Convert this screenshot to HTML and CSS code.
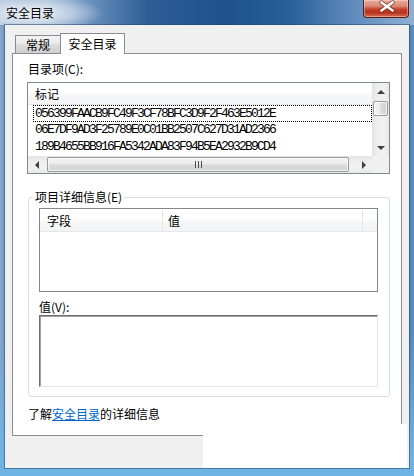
FILE: index.html
```html
<!DOCTYPE html>
<html lang="zh-CN">
<head>
<meta charset="utf-8">
<title>安全目录</title>
<link rel="stylesheet" href="styles.css">
</head>
<body>
<div class="window">
  <div class="titlebar">
    <span class="title">安全目录</span>
    <div class="close">
      <svg width="46" height="18" viewBox="0 0 46 18">
        <path d="M18.5 3.5 L29.5 11.5 M29.5 3.5 L18.5 11.5" stroke="#5a1409" stroke-width="4.5" stroke-linecap="round" opacity="0.55" fill="none"/>
        <path d="M18.5 3.5 L29.5 11.5 M29.5 3.5 L18.5 11.5" stroke="#ffffff" stroke-width="2.4" stroke-linecap="square" fill="none"/>
      </svg>
    </div>
  </div>
  <div class="client">
    <div class="tabs">
      <div class="tab">常规</div>
      <div class="tab active">安全目录</div>
    </div>
    <div class="panel">
      <div class="label">目录项(C):</div>
      <div class="listbox">
        <div class="lb-main">
          <div class="lb-content">
            <div class="lv-header"><span class="hcol">标记</span></div>
            <div class="row focus">056399FAACB9FC49F3CF78BFC3D9F2F463E5012E</div>
            <div class="row">06E7DF9AD3F25789E0C01BB2507C627D31AD2366</div>
            <div class="row">189B4655BB916FA5342ADA83F94B5EA2932B9CD4</div>
          </div>
          <div class="vscroll">
            <div class="sbtn"><span class="tri up"></span></div>
            <div class="vthumb"></div>
            <div class="vtrack"></div>
            <div class="sbtn"><span class="tri down"></span></div>
          </div>
        </div>
        <div class="lb-bottom">
          <div class="hscroll">
            <div class="sbtn"><span class="tri left"></span></div>
            <div class="hthumb"><span class="grip"></span></div>
            <div class="htrack"></div>
            <div class="sbtn"><span class="tri right"></span></div>
          </div>
          <div class="corner"></div>
        </div>
      </div>

      <fieldset class="group">
        <legend>项目详细信息(E)</legend>
        <div class="listview">
          <div class="lv-header cols">
            <span class="c1">字段</span>
            <span class="c2">值</span>
            <span class="c3"></span>
          </div>
        </div>
        <div class="label2">值(V):</div>
        <div class="textbox"></div>
      </fieldset>

      <div class="linkline">了解<a class="link">安全目录</a>的详细信息</div>
    </div>
  </div>
  <div class="blank"></div>
</div>
</body>
</html>
```

FILE: styles.css
```css
* { box-sizing: border-box; }
html, body { margin: 0; padding: 0; }
body {
  width: 414px;
  height: 476px;
  overflow: hidden;
  font-family: "Noto Sans CJK SC", "Noto Sans", sans-serif;
  font-size: 12px;
  color: #000;
  background: #fff;
}

.window {
  position: relative;
  width: 414px;
  height: 476px;
  display: flex;
  flex-direction: column;
  background:
    linear-gradient(180deg, rgba(120,150,190,0) 0%, rgba(120,180,225,0) 70%, rgba(110,180,226,1) 98%),
    linear-gradient(90deg, #8aa7c9 0%, #5e8fc1 2%, #3c73ad 10%, #2a5f98 40%, #2f6aa6 70%, #2a5e97 97%, #5f93c6 100%);
}

.titlebar {
  height: 25px;
  display: flex;
  align-items: flex-start;
  background:
    radial-gradient(ellipse 70px 18px at 34px 13px, rgba(235,240,246,0.95) 0%, rgba(220,230,240,0.6) 55%, rgba(200,215,232,0) 100%),
    linear-gradient(90deg, #b4c6db 0%, #9fb7d2 12%, #5f88b7 24%, #2c5d95 36%, #1f528c 55%, #2a5f99 70%, #5b88bb 84%, #8fb0d3 100%);
}
.title {
  padding-left: 6px;
  line-height: 25px;
  font-size: 12px;
  color: #000;
  text-shadow: 0 0 6px rgba(255,255,255,0.9);
}
.close {
  margin-left: auto;
  margin-right: 5px;
  width: 46px;
  height: 18px;
  border: 1px solid #5e1d13;
  border-top: none;
  border-radius: 0 0 4px 4px;
  background: linear-gradient(180deg, #e9aa9b 0%, #dc8a76 35%, #c3402a 55%, #b8311c 75%, #d6705a 100%);
  box-shadow: inset 0 0 0 1px rgba(255,255,255,0.35);
  overflow: hidden;
}
.close svg { display: block; margin: -1px 0 0 -1px; }

.client {
  flex: 1;
  margin: 0 5px 8px 5px;
  padding: 8px 7px 0 7px;
  background: #f0f0f0;
  display: flex;
  flex-direction: column;
  box-shadow: 0 0 0 1px rgba(40,70,110,0.55);
}

.tabs {
  height: 21px;
  display: flex;
  align-items: flex-end;
  padding-left: 3px;
  margin-bottom: -1px;
  position: relative;
  z-index: 1;
}
.tab {
  width: 46px;
  height: 19px;
  border: 1px solid #898c95;
  border-bottom: 1px solid #898c95;
  background: linear-gradient(180deg, #f3f3f3 0%, #ebebeb 45%, #dddddd 50%, #cfcfcf 100%);
  display: flex;
  align-items: center;
  justify-content: center;
  line-height: 16px;
}
.tab.active {
  width: 65px;
  height: 21px;
  margin-left: -1px;
  background: #fff;
  border-bottom: none;
  padding-bottom: 1px;
}

.panel {
  width: 390px;
  height: 383px;
  border: 1px solid #898c95;
  background: #fff;
  padding: 7px 0 0 14px;
  display: flex;
  flex-direction: column;
}

.label { line-height: 16px; height: 16px; padding-left: 1px; }

.listbox {
  margin-top: 5px;
  width: 363px;
  height: 92px;
  border: 1px solid #828790;
  display: flex;
  flex-direction: column;
}
.lb-main { display: flex; height: 73px; }
.lb-content { flex: 1; }
.lv-header {
  height: 22px;
  line-height: 21px;
  background: linear-gradient(180deg, #ffffff 0%, #ffffff 45%, #f6f7f8 55%, #f3f4f5 100%);
  border-bottom: 1px solid #e5e6e8;
}
.hcol { padding-left: 7px; }
.row {
  height: 17px;
  line-height: 16px;
  margin-left: 5px;
  padding-left: 2px;
  font-family: "Liberation Mono", monospace;
  font-size: 13px;
  letter-spacing: -1.8px;
  white-space: nowrap;
  overflow: hidden;
}
.row.focus {
  border: 1px dotted #000;
  padding-left: 1px;
  line-height: 15px;
}

.vscroll {
  width: 17px;
  display: flex;
  flex-direction: column;
  background: linear-gradient(90deg, #e3e3e3 0%, #eeeeee 30%, #f1f1f1 70%, #e8e8e8 100%);
}
.sbtn {
  width: 17px;
  height: 17px;
  display: flex;
  align-items: center;
  justify-content: center;
  flex: none;
}
.vthumb {
  margin: 1px 1px 0 1px;
  height: 15px;
  border: 1px solid #9a9a9a;
  border-radius: 2px;
  background: linear-gradient(90deg, #f4f4f4 0%, #ebebeb 45%, #d9d9d9 55%, #d4d4d4 100%);
  box-shadow: inset 0 0 0 1px rgba(255,255,255,0.7);
}
.vtrack { flex: 1; }

.tri { width: 0; height: 0; display: block; }
.tri.up { border-left: 4px solid transparent; border-right: 4px solid transparent; border-bottom: 4px solid #404040; }
.tri.down { border-left: 4px solid transparent; border-right: 4px solid transparent; border-top: 4px solid #404040; }
.tri.left { border-top: 4px solid transparent; border-bottom: 4px solid transparent; border-right: 4px solid #404040; }
.tri.right { border-top: 4px solid transparent; border-bottom: 4px solid transparent; border-left: 4px solid #404040; }

.lb-bottom { display: flex; height: 17px; }
.hscroll {
  flex: 1;
  display: flex;
  background: linear-gradient(180deg, #e3e3e3 0%, #eeeeee 30%, #f1f1f1 70%, #e8e8e8 100%);
}
.hthumb {
  width: 302px;
  margin: 1px 0 1px 2px;
  border: 1px solid #9a9a9a;
  border-radius: 2px;
  background: linear-gradient(180deg, #f4f4f4 0%, #ebebeb 45%, #d9d9d9 55%, #d4d4d4 100%);
  box-shadow: inset 0 0 0 1px rgba(255,255,255,0.7);
  display: flex;
  align-items: center;
  justify-content: center;
}
.grip {
  width: 7px;
  height: 7px;
  background: repeating-linear-gradient(90deg, #4c4c4c 0 1px, transparent 1px 3px);
}
.htrack { flex: 1; }
.corner { width: 17px; background: #f0f0f0; }

.group {
  margin: 15px 0 0 1px;
  width: 362px;
  border: 1px solid #d5dfe5;
  border-radius: 3px;
  padding: 0 10px 9px 10px;
  min-width: 0;
}
.group legend {
  padding: 0 2px;
  margin-left: -6px;
  line-height: 16px;
  height: 16px;
}
.listview {
  margin-top: 3px;
  width: 339px;
  height: 84px;
  border: 1px solid #828790;
  padding-top: 1px;
}
.cols { display: flex; height: 22px; }
.cols span { display: block; height: 21px; }
.c1 { width: 123px; padding-left: 7px; border-right: 1px solid #e3e4e6; }
.c2 { width: 200px; padding-left: 5px; border-right: 1px solid #e3e4e6; }
.c3 { flex: 1; }

.label2 { margin-top: 7px; line-height: 16px; height: 16px; }
.textbox {
  width: 339px;
  height: 72px;
  border: 1px solid;
  border-color: #6e6e6e #e3e3e3 #e3e3e3 #6e6e6e;
  box-shadow: inset 1px 1px 0 #a0a0a0;
  background: #fff;
}

.linkline { margin-top: 9px; margin-left: 1px; line-height: 16px; }
.link { color: #0066cc; text-decoration: underline; }

.blank {
  position: absolute;
  left: 203px;
  top: 424px;
  width: 204px;
  height: 44px;
  background: #fff;
}
```
